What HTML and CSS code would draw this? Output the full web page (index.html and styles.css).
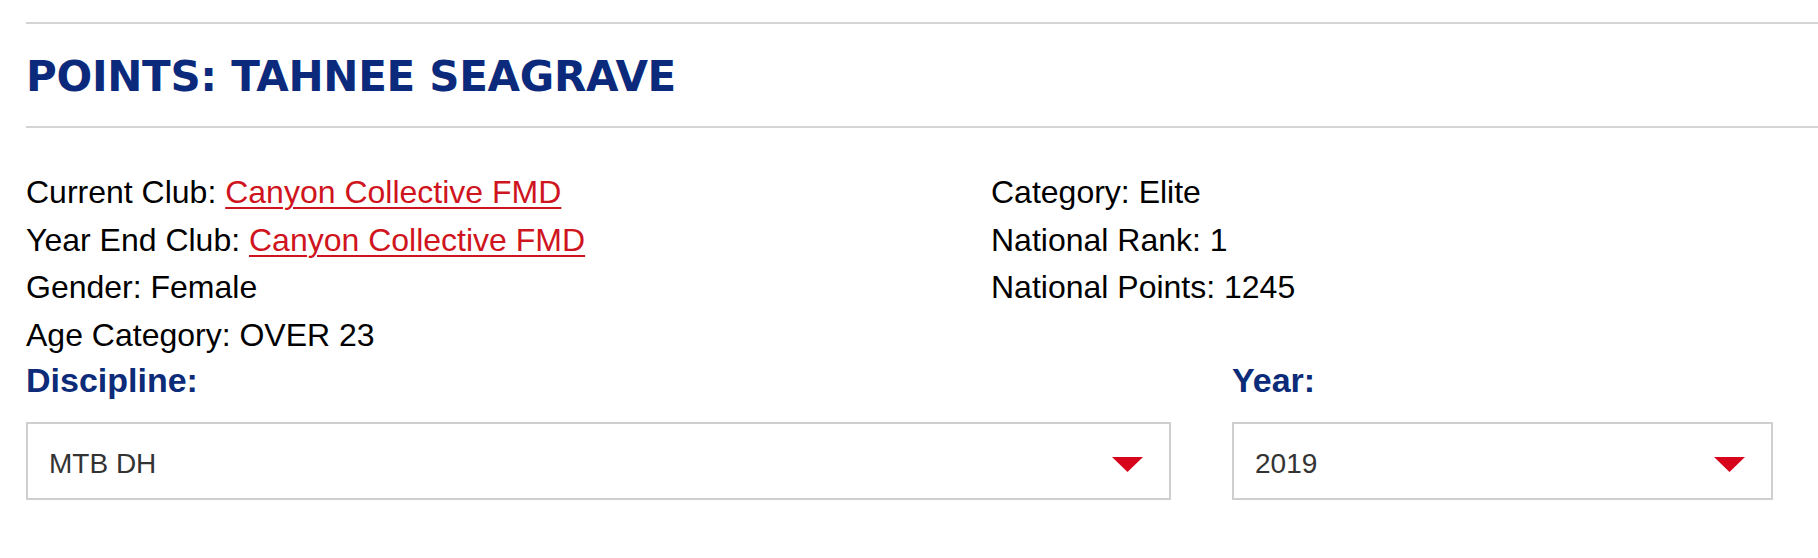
FILE: index.html
```html
<!DOCTYPE html>
<html lang="en">
<head>
<meta charset="utf-8">
<title>Points: Tahnee Seagrave</title>
<link rel="stylesheet" href="styles.css">
</head>
<body>
<div class="page">
  <div class="rule rule-top"></div>
  <h1 class="title">POINTS: TAHNEE SEAGRAVE</h1>
  <div class="rule"></div>

  <div class="info">
    <div class="info-col">
      <div class="info-line">Current Club: <a href="#" class="club-link">Canyon Collective FMD</a></div>
      <div class="info-line">Year End Club: <a href="#" class="club-link">Canyon Collective FMD</a></div>
      <div class="info-line">Gender: Female</div>
      <div class="info-line">Age Category: OVER 23</div>
    </div>
    <div class="info-col">
      <div class="info-line">Category: Elite</div>
      <div class="info-line">National Rank: 1</div>
      <div class="info-line">National Points: 1245</div>
    </div>
  </div>

  <div class="filters">
    <div class="filter">
      <div class="filter-label">Discipline:</div>
      <div class="select">
        <span class="select-value">MTB DH</span>
        <svg class="select-arrow" width="31" height="15" viewBox="0 0 31 15"><polygon points="0,0 31,0 15.5,15" fill="#d6051c"/></svg>
      </div>
    </div>
    <div class="filter">
      <div class="filter-label">Year:</div>
      <div class="select">
        <span class="select-value">2019</span>
        <svg class="select-arrow" width="31" height="15" viewBox="0 0 31 15"><polygon points="0,0 31,0 15.5,15" fill="#d6051c"/></svg>
      </div>
    </div>
  </div>
</div>
</body>
</html>
```

FILE: styles.css
```css
html, body {
  margin: 0;
  padding: 0;
  background: #ffffff;
}

body {
  font-family: "Liberation Sans", Arial, Helvetica, sans-serif;
  color: #000000;
}

.page {
  padding-left: 26px;
  padding-bottom: 40px;
}

.rule {
  height: 0;
  border-top: 2px solid #d4d4d4;
}

.rule-top {
  margin-top: 22px;
}

.title {
  margin: 0;
  padding: 28px 0 24px 0;
  font-family: "DejaVu Sans", "Liberation Sans", sans-serif;
  font-weight: bold;
  font-size: 42px;
  line-height: 50px;
  letter-spacing: -0.3px;
  color: #0b2a7c;
}

.info {
  display: grid;
  grid-template-columns: 965px auto;
  margin-top: 41px;
  font-size: 32px;
  line-height: 47.5px;
}

.info-line {
  white-space: nowrap;
}

.club-link {
  color: #cf1420;
  text-decoration: underline;
  text-decoration-thickness: 2px;
  text-underline-offset: 4px;
}

.filters {
  display: grid;
  grid-template-columns: 1145px 541px;
  column-gap: 61px;
}

.filter-label {
  font-size: 34px;
  font-weight: bold;
  line-height: 38px;
  color: #0c2b78;
  margin-top: 2px;
  margin-bottom: 23px;
}

.select {
  box-sizing: border-box;
  height: 78px;
  border: 2px solid #cfcfcf;
  display: flex;
  align-items: center;
  justify-content: space-between;
  padding: 0 26px 0 21px;
  background: #ffffff;
}

.select-value {
  font-size: 28px;
  color: #333333;
  padding-top: 6px;
}

.select-arrow {
  display: block;
  margin-top: 6px;
}
```
